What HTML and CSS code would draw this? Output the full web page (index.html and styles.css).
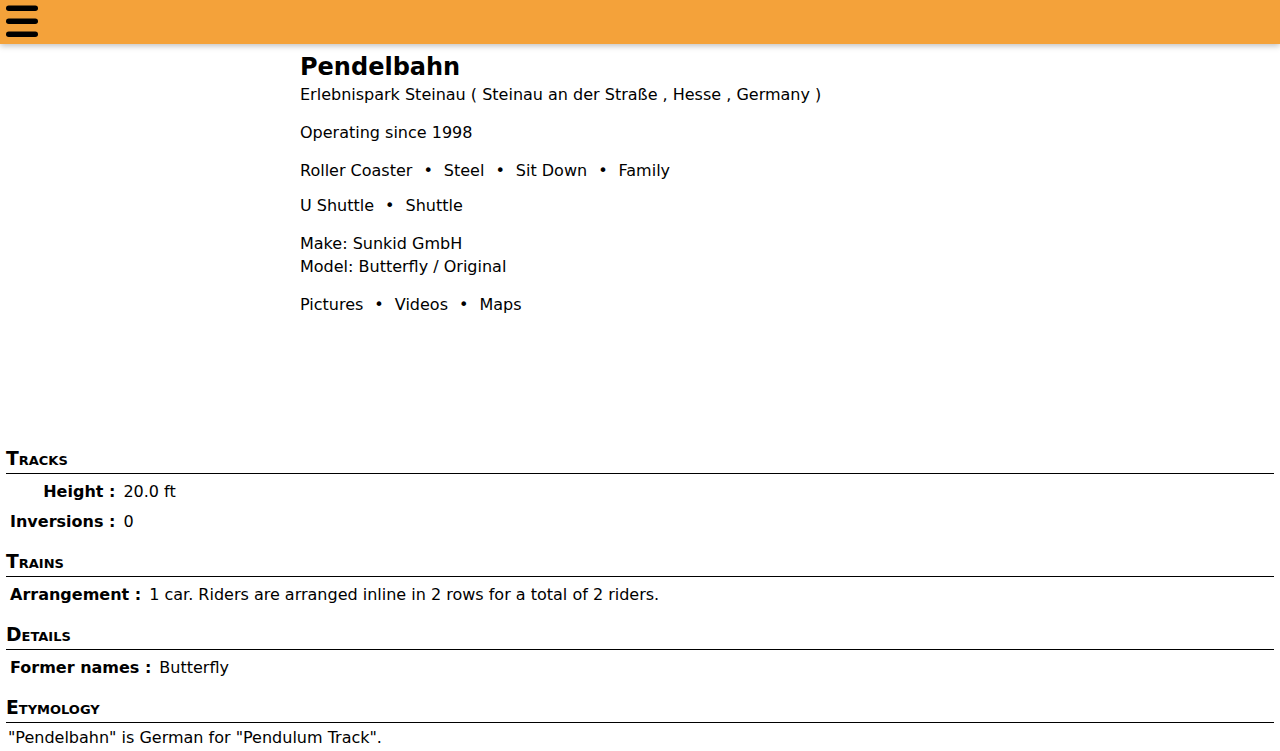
FILE: index.html
```html
<!DOCTYPE html>
<html lang="en">
<head>
<meta charset="utf-8">
<title>Pendelbahn</title>
<link rel="stylesheet" href="styles.css">
</head>
<body>
<header class="topbar">
  <button class="menu" aria-label="Menu">
    <svg width="32" height="34" viewBox="0 0 32 34">
      <rect x="0" y="0.5" width="32" height="5.5" rx="2.75" fill="#000"/>
      <rect x="0" y="13.5" width="32" height="5.5" rx="2.75" fill="#000"/>
      <rect x="0" y="26.5" width="32" height="5.5" rx="2.75" fill="#000"/>
    </svg>
  </button>
</header>
<main>
  <div class="intro">
    <div class="photo"></div>
    <div class="info">
      <h1 class="title">Pendelbahn</h1>
      <div class="park">Erlebnispark Steinau ( Steinau an der Straße , Hesse , Germany )</div>
      <p class="para">Operating since 1998</p>
      <p class="para">Roller Coaster<span class="sep">•</span>Steel<span class="sep">•</span>Sit Down<span class="sep">•</span>Family</p>
      <p class="para tight">U Shuttle<span class="sep">•</span>Shuttle</p>
      <p class="para">Make: Sunkid GmbH<br>Model: Butterfly / Original</p>
      <p class="para">Pictures<span class="sep">•</span>Videos<span class="sep">•</span>Maps</p>
    </div>
  </div>
  <section class="block">
    <h3 class="heading">Tracks</h3>
    <table class="facts">
      <tr><th>Height :</th><td>20.0 ft</td></tr>
      <tr><th>Inversions :</th><td>0</td></tr>
    </table>
  </section>
  <section class="block">
    <h3 class="heading">Trains</h3>
    <table class="facts">
      <tr><th>Arrangement :</th><td>1 car. Riders are arranged inline in 2 rows for a total of 2 riders.</td></tr>
    </table>
  </section>
  <section class="block">
    <h3 class="heading">Details</h3>
    <table class="facts">
      <tr><th>Former names :</th><td>Butterfly</td></tr>
    </table>
  </section>
  <section class="block">
    <h3 class="heading">Etymology</h3>
    <p class="ety">"Pendelbahn" is German for "Pendulum Track".</p>
  </section>
</main>
</body>
</html>
```
FILE: styles.css
```css
html, body {
  margin: 0;
  padding: 0;
  background: #fff;
}
body {
  font-family: "DejaVu Sans", sans-serif;
  font-size: 16px;
  line-height: 23px;
  color: #000;
}
.topbar {
  height: 44px;
  background: #f4a23a;
  box-shadow: 0 2px 6px rgba(0, 0, 0, 0.25);
  display: flex;
  align-items: flex-start;
  padding-left: 6px;
}
.menu {
  border: 0;
  background: transparent;
  padding: 0;
  margin-top: 5px;
  width: 32px;
  height: 34px;
  display: block;
}
.menu svg {
  display: block;
}
.intro {
  display: flex;
  height: 389px;
}
.photo {
  width: 300px;
  flex: none;
}
.info {
  padding-top: 8px;
}
.title {
  font-size: 24px;
  line-height: 31px;
  font-weight: bold;
  margin: 0;
}
.park {
  margin: 0;
}
.para {
  margin: 15px 0 0;
}
.para.tight {
  margin-top: 12px;
}
.sep {
  margin: 0 11px;
}
.block {
  margin: 0 6px;
}
.heading {
  font-variant: small-caps;
  font-size: 18.72px;
  line-height: 21px;
  font-weight: bold;
  margin: 15px 0 0;
  padding-bottom: 4px;
  border-bottom: 1px solid #000;
}
.facts {
  border-spacing: 2px;
  font-size: 16px;
  line-height: 22px;
  margin-left: 1px;
}
.facts th {
  text-align: right;
  padding: 5px 1px 1px;
  font-weight: bold;
  white-space: nowrap;
}
.facts td {
  padding: 5px 1px 1px 5px;
}
.ety {
  margin: 4px 2px 0;
  line-height: 22px;
}
```
